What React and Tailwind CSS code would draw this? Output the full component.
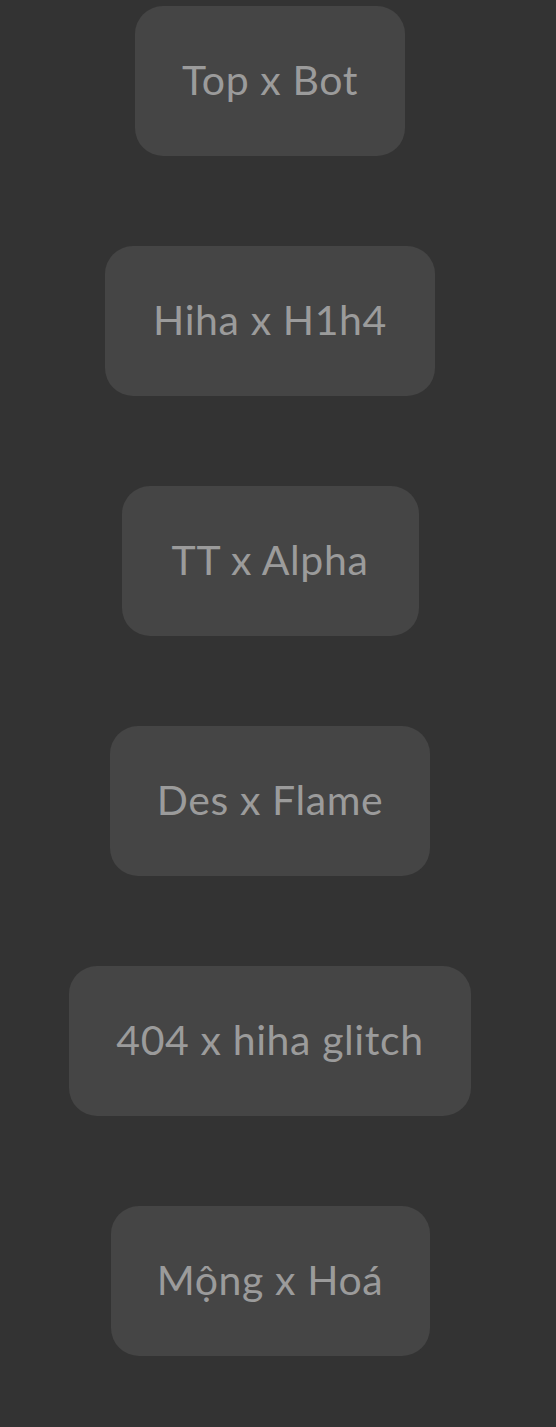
export default function App() {
  const items = [
    { t: "Top x Bot", w: "w-[270px]" },
    { t: "Hiha x H1h4", w: "w-[330px]" },
    { t: "TT x Alpha", w: "w-[297px]" },
    { t: "Des x Flame", w: "w-[320px]" },
    { t: "404 x hiha glitch", w: "w-[402px]" },
    { t: "Mộng x Hoá", w: "w-[319px]" },
  ];
  return (
    <div className="min-h-[1427px] bg-[#333333]">
      <div className="w-[540px] flex flex-col items-center gap-[90px] pt-[6px]" style={{ fontFamily: "Lato, 'Noto Sans', sans-serif" }}>
        {items.map(({ t, w }) => (
          <div key={t} className={`${w} h-[150px] flex items-center justify-center pb-[3px] rounded-[28px] bg-[#454545] text-[#9b9b9b] text-[41px] tracking-[0.6px] whitespace-nowrap`}>
            {t}
          </div>
        ))}
      </div>
    </div>
  );
}
